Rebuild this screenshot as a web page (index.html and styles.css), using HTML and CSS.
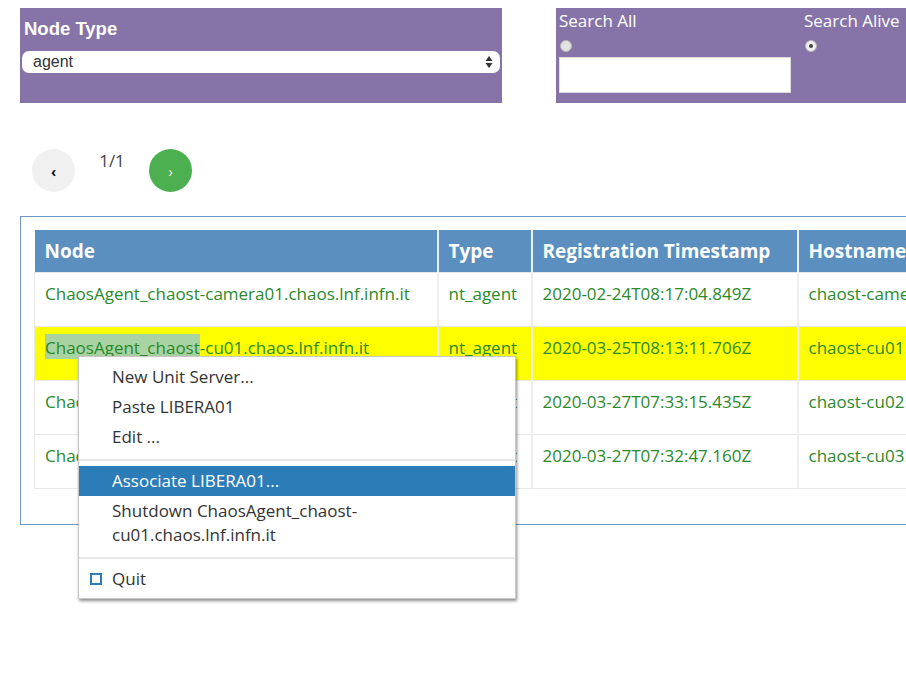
FILE: index.html
```html
<!DOCTYPE html>
<html>
<head>
<meta charset="utf-8">
<link rel="stylesheet" href="styles.css">
</head>
<body>
<div class="page">
  <div class="filters">
    <div class="box box-type">
      <div class="label">Node Type</div>
      <div class="select"><span>agent</span>
        <svg class="arrows" width="8" height="14" viewBox="0 0 8 14"><path d="M4 1 L7.5 6 H0.5 Z M4 13 L7.5 8 H0.5 Z" fill="#333"/></svg>
      </div>
    </div>
    <div class="box box-search">
      <div class="search-col">
        <div class="slabel">Search All</div>
        <span class="radio"></span>
        <div class="input"></div>
      </div>
      <div class="search-col alive">
        <div class="slabel">Search Alive</div>
        <span class="radio checked"></span>
      </div>
    </div>
  </div>

  <div class="pager">
    <div class="pbtn prev">&#8249;</div>
    <div class="pnum">1/1</div>
    <div class="pbtn next">&#8250;</div>
  </div>

  <div class="table-wrap">
    <table class="nodes">
      <colgroup>
        <col class="c1"><col class="c2"><col class="c3"><col class="c4">
      </colgroup>
      <thead>
        <tr><th>Node</th><th>Type</th><th>Registration Timestamp</th><th>Hostname</th></tr>
      </thead>
      <tbody>
        <tr><td>ChaosAgent_chaost-camera01.chaos.lnf.infn.it</td><td>nt_agent</td><td>2020-02-24T08:17:04.849Z</td><td>chaost-camera01.chaos.lnf.infn.it</td></tr>
        <tr class="sel"><td><span class="hl">ChaosAgent_chaost</span>-cu01.chaos.lnf.infn.it</td><td>nt_agent</td><td>2020-03-25T08:13:11.706Z</td><td>chaost-cu01.chaos.lnf.infn.it</td></tr>
        <tr><td>ChaosAgent_chaost-cu02.chaos.lnf.infn.it</td><td>nt_agent</td><td>2020-03-27T07:33:15.435Z</td><td>chaost-cu02.chaos.lnf.infn.it</td></tr>
        <tr><td>ChaosAgent_chaost-cu03.chaos.lnf.infn.it</td><td>nt_agent</td><td>2020-03-27T07:32:47.160Z</td><td>chaost-cu03.chaos.lnf.infn.it</td></tr>
      </tbody>
    </table>
  </div>
</div>

<ul class="menu">
  <li>New Unit Server...</li>
  <li>Paste LIBERA01</li>
  <li>Edit ...</li>
  <li class="sep"></li>
  <li class="active">Associate LIBERA01...</li>
  <li>Shutdown ChaosAgent_chaost-<br>cu01.chaos.lnf.infn.it</li>
  <li class="sep"></li>
  <li class="quit"><span class="qicon"></span>Quit</li>
</ul>
</body>
</html>
```

FILE: styles.css
```css
html, body {
  margin: 0;
  padding: 0;
  overflow: hidden;
  background: #fff;
}
body {
  width: 906px;
  height: 682px;
  position: relative;
  font-family: "Open Sans", "DejaVu Sans", sans-serif;
}
.page {
  padding: 8px 0 0 20px;
  width: 1200px;
}
.filters {
  display: flex;
  gap: 54px;
  align-items: flex-start;
}
.box {
  background: #8674a8;
  height: 95px;
  box-sizing: border-box;
}
.box-type {
  width: 482px;
  padding: 9px 2px 0 2px;
}
.label {
  font-family: "Liberation Sans", Arial, sans-serif;
  font-weight: bold;
  font-size: 18.5px;
  color: #fff;
  padding-left: 2px;
  line-height: 24px;
}
.select {
  margin-top: 10px;
  height: 22px;
  background: #fff;
  border-radius: 7px;
  display: flex;
  align-items: center;
  justify-content: space-between;
  padding: 0 7px 0 11px;
  font-family: "Liberation Sans", Arial, sans-serif;
  font-size: 16px;
  color: #333;
}
.box-search {
  width: 400px;
  display: flex;
  padding: 1px 0 0 3px;
  gap: 13px;
}
.search-col {
  display: flex;
  flex-direction: column;
  align-items: flex-start;
}
.slabel {
  color: #fff;
  font-size: 17px;
  line-height: 24px;
}
.radio {
  width: 12px;
  height: 12px;
  border-radius: 50%;
  background: #e2e2e2;
  border: 1px solid #b5b5b5;
  box-sizing: border-box;
  margin: 7px 0 0 1px;
  position: relative;
}
.radio.checked {
  background: #eee;
}
.radio.checked::after {
  content: "";
  position: absolute;
  left: 3px;
  top: 3px;
  width: 4px;
  height: 4px;
  border-radius: 50%;
  background: #444;
}
.input {
  margin-top: 5px;
  width: 232px;
  height: 36px;
  background: #fff;
  border: 1px solid #ddd;
  box-sizing: border-box;
}
.pager {
  display: flex;
  align-items: flex-start;
  margin: 46px 0 0 12px;
}
.pbtn {
  width: 43px;
  height: 43px;
  border-radius: 50%;
  display: flex;
  align-items: center;
  justify-content: center;
  font-size: 14px;
  font-weight: bold;
  padding-top: 2px;
  box-sizing: border-box;
}
.prev {
  background: #f0f0f0;
  color: #111;
}
.next {
  background: #4caf50;
  color: #fff;
  font-weight: normal;
}
.pnum {
  font-size: 17px;
  color: #444;
  width: 74px;
  text-align: center;
  line-height: 24px;
}
.table-wrap {
  margin-top: 24px;
  border: 1px solid #6b97c6;
  border-right: none;
  padding: 13px 0 36px 13px;
  height: 309px;
  box-sizing: border-box;
}
.nodes {
  border-collapse: collapse;
  table-layout: fixed;
  width: 1100px;
}
.c1 { width: 403px; }
.c2 { width: 94px; }
.c3 { width: 266px; }
.c4 { width: 337px; }
.nodes th {
  background: #5a8fbf;
  color: #fff;
  font-weight: bold;
  font-size: 19px;
  text-align: left;
  height: 42px;
  padding: 0 10px;
  border-left: 2px solid #eee;
  box-sizing: border-box;
  white-space: nowrap;
}
.nodes th:first-child { border-left: none; }
.nodes td {
  color: #2a8a2a;
  font-size: 17px;
  line-height: 22px;
  padding: 10px 10px 21px;
  border: 1px solid #e8e8e8;
  border-left: 2px solid #eee;
  white-space: nowrap;
  overflow: hidden;
  vertical-align: top;
}
.nodes td:first-child { border-left: 1px solid #e8e8e8; }
.nodes tr.sel td {
  background: #ffff00;
}
.hl {
  background: #a9d3a2;
  padding: 2px 0 0;
}
.menu {
  position: absolute;
  left: 78px;
  top: 356px;
  width: 438px;
  margin: 0;
  padding: 5px 0 4px;
  list-style: none;
  background: #fff;
  border: 1px solid #c8c8c8;
  box-sizing: border-box;
  box-shadow: 1px 2px 3px rgba(0, 0, 0, 0.45);
  font-size: 17px;
  color: #333;
}
.menu li {
  padding: 3px 0 3px 33px;
  line-height: 24px;
}
.menu li.sep {
  padding: 0;
  height: 2px;
  background: #e8e8e8;
  margin: 7px 0 5px;
}
.menu li.active {
  background: #2c7cb8;
  color: #fff;
}
.menu li.quit {
  position: relative;
}
.qicon {
  position: absolute;
  left: 11px;
  top: 9px;
  width: 12px;
  height: 12px;
  border: 2px solid #2c7cb8;
  box-sizing: border-box;
}
```
